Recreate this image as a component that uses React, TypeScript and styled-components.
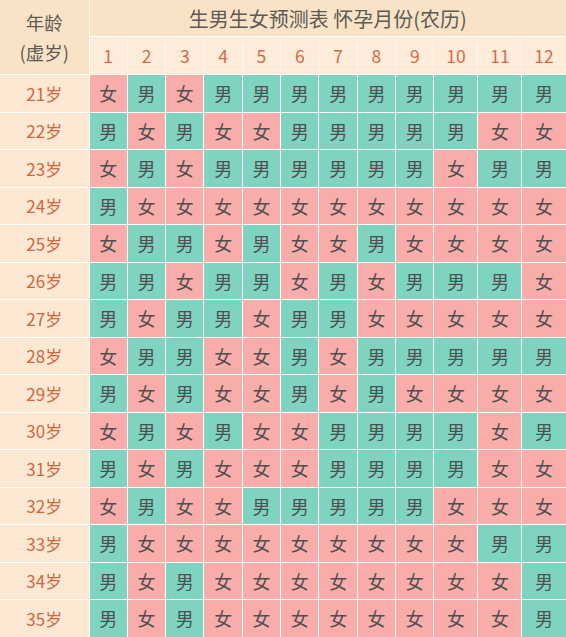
import React from 'react';
import styled, { createGlobalStyle } from 'styled-components';

const GlobalStyle = createGlobalStyle`
  html, body {
    margin: 0;
    padding: 0;
    background: #ffffff;
  }
  body {
    font-family: "Noto Sans CJK SC", "Noto Sans", sans-serif;
  }
`;

const Table = styled.table`
  width: 566px;
  border-collapse: collapse;
  table-layout: fixed;
`;

const HeadCell = styled.th<{ $light?: boolean }>`
  background: ${({ $light }) => ($light ? '#fdecd9' : '#f8e3c7')};
  border: 1.5px solid #ffffff;
  padding: 0;
  font-weight: 400;
  text-align: center;
`;

const AgeHead = styled(HeadCell)`
  color: #5e5a55;
  font-size: 18.5px;
  line-height: 30px;
  border-left: none;
  border-top: none;
`;

const Title = styled(HeadCell)`
  height: 36px;
  color: #5e5a55;
  font-size: 20px;
  border-top: none;
  border-right: none;
`;

const MonthNum = styled(HeadCell)`
  height: 37px;
  color: #d66a43;
  font-size: 17.5px;
  border-color: #fff8ef;
`;

const AgeCell = styled.td`
  background: #fde9d3;
  color: #d0663e;
  font-size: 17px;
  text-align: center;
  padding: 0;
  border: 1.5px solid #ffffff;
  border-left: none;
`;

const Cell = styled.td<{ $boy: boolean }>`
  background: ${({ $boy }) => ($boy ? '#7ed4c1' : '#f8adab')};
  color: #4f4f4f;
  font-size: 18px;
  text-align: center;
  padding: 0;
  border: 1.5px solid #ffffff;
`;

const Row = styled.tr`
  height: 37.5px;
`;

// B = 男, G = 女
const data: Record<number, string> = {
  21: 'GBGBBBBBBBBB',
  22: 'BGBGGBBBBBGG',
  23: 'GBGBBBBBBGBB',
  24: 'BGGGGGGGGGGG',
  25: 'GBBGBGGBGGGG',
  26: 'BBGBBGBGBBBG',
  27: 'BGBBGBBGGGGG',
  28: 'GBBGGBGBBBBB',
  29: 'BGBGGBGBGGGG',
  30: 'GBGBGGBBBBGB',
  31: 'BGBGGGBBBBGG',
  32: 'GBGGBBBBBGGG',
  33: 'BGGGGGGGGGBB',
  34: 'BGBGGGGGGGGB',
  35: 'BGBGGGGGGGGB',
};

const months = Array.from({ length: 12 }, (_, i) => i + 1);

const App: React.FC = () => (
  <>
    <GlobalStyle />
    <Table>
      <colgroup>
        <col style={{ width: 89 }} />
        {months.map((m) => (
          <col key={m} style={{ width: m >= 10 ? 44 : 38.33 }} />
        ))}
      </colgroup>
      <thead>
        <tr>
          <AgeHead rowSpan={2}>
            年龄
            <br />
            (虚岁)
          </AgeHead>
          <Title colSpan={12}>生男生女预测表 怀孕月份(农历)</Title>
        </tr>
        <tr>
          {months.map((m) => (
            <MonthNum key={m} $light>
              {m}
            </MonthNum>
          ))}
        </tr>
      </thead>
      <tbody>
        {Object.keys(data).map((age) => (
          <Row key={age}>
            <AgeCell>{age}岁</AgeCell>
            {data[Number(age)].split('').map((g, i) => (
              <Cell key={i} $boy={g === 'B'}>
                {g === 'B' ? '男' : '女'}
              </Cell>
            ))}
          </Row>
        ))}
      </tbody>
    </Table>
  </>
);

export default App;
